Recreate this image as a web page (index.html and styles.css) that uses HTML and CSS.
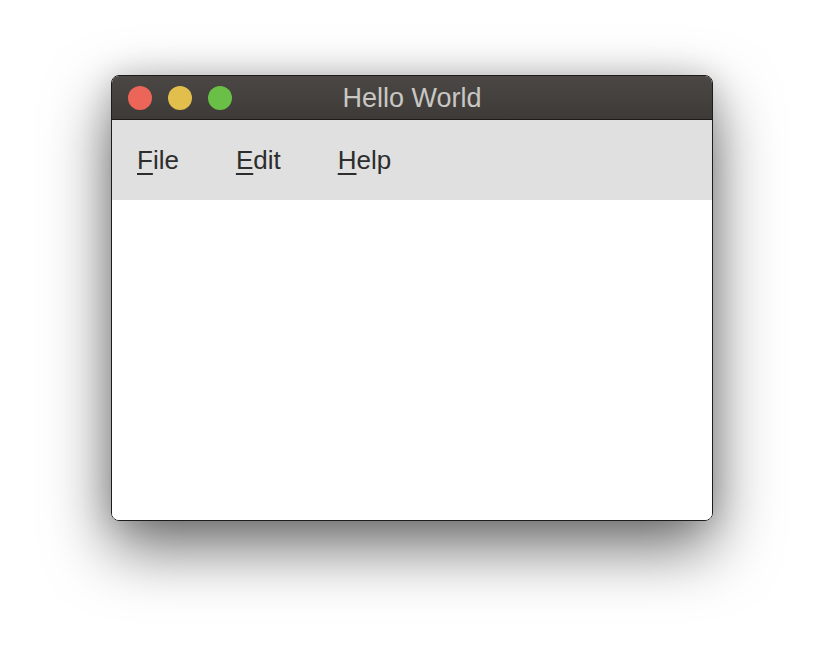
FILE: index.html
```html
<!DOCTYPE html>
<html>
<head>
<meta charset="utf-8">
<link rel="stylesheet" href="styles.css">
</head>
<body>
<div class="window">
  <div class="titlebar">
    <div class="lights">
      <span class="light red"></span>
      <span class="light yellow"></span>
      <span class="light green"></span>
    </div>
    <div class="title">Hello World</div>
  </div>
  <div class="menubar">
    <span class="menu"><u>F</u>ile</span>
    <span class="menu"><u>E</u>dit</span>
    <span class="menu"><u>H</u>elp</span>
  </div>
  <div class="content"></div>
</div>
</body>
</html>
```
FILE: styles.css
```css
html, body { margin: 0; padding: 0; background: #ffffff; }
body { width: 824px; height: 668px; overflow: hidden; font-family: "Liberation Sans", Arial, sans-serif; }
.window {
  margin: 75px 0 0 111px;
  width: 600px;
  height: 444px;
  border: 1px solid #1e1c1b;
  border-radius: 8px;
  overflow: hidden;
  display: flex;
  flex-direction: column;
  box-shadow: 0 26px 64px rgba(0,0,0,0.58), 0 0 30px rgba(0,0,0,0.15);
}
.titlebar {
  height: 43px;
  background: linear-gradient(#4a4744, #3d3a37);
  border-bottom: 1px solid #1c1b1a;
  position: relative;
  display: flex;
  align-items: center;
}
.lights { display: flex; gap: 16px; padding-left: 16px; }
.light { width: 24px; height: 24px; border-radius: 50%; display: block; }
.red { background: #ec6559; }
.yellow { background: #e2bf4c; }
.green { background: #6ac046; }
.title {
  position: absolute; left: 0; right: 0; top: 0; bottom: 0;
  display: flex; align-items: center; justify-content: center;
  color: #c9c7c4; font-size: 27px; padding-top: 2px;
}
.menubar {
  height: 80px;
  background: #dfe0df;
  display: flex;
  align-items: center;
  padding-left: 25px;
}
.menu { font-size: 26px; color: #2d2d2d; margin-right: 57px; }
.menu u { text-decoration-thickness: 1.5px; text-underline-offset: 4px; }
.content { flex: 1; background: #ffffff; }
```
